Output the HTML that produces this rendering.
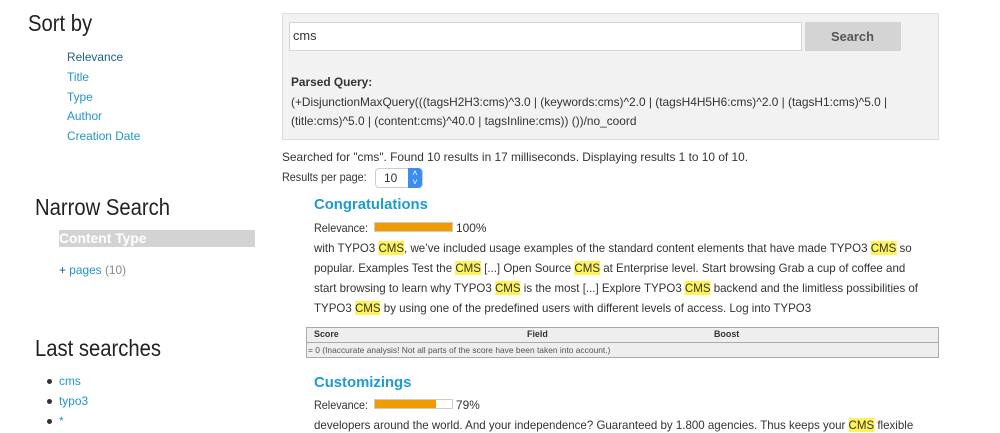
<!DOCTYPE html>
<html><head><meta charset="utf-8"><style>
body{margin:0;width:1000px;height:432px;overflow:hidden;background:#fff;font-family:"Liberation Sans",sans-serif;color:#333;position:relative}
.a{position:absolute;white-space:nowrap}
.t{position:absolute;white-space:nowrap;font-size:12px;transform:scaleX(.99);transform-origin:0 50%;line-height:16px}
.b{transform:scaleX(.96)}
.n{transform:scaleX(.9)}
.h{position:absolute;white-space:nowrap;font-size:23px;font-weight:300;color:#222;transform:scaleX(.88);transform-origin:0 50%}
.lk{color:#1f95c8}
.m{background:#fff35a}
.bar{position:absolute;height:8px;border:1px solid #ccc;background:#fff}
.bar i{display:block;height:8px;background:#f09c00}
</style></head><body>
<div class="h" style="left:28px;top:10px">Sort by</div>
<div class="t" style="left:67px;top:49px;color:#1b5f86">Relevance</div>
<div class="t lk" style="left:67px;top:69px">Title</div>
<div class="t lk" style="left:67px;top:89px">Type</div>
<div class="t lk" style="left:67px;top:108px">Author</div>
<div class="t lk" style="left:67px;top:128px">Creation Date</div>
<div class="h" style="left:35px;top:194px">Narrow Search</div>
<div class="a" style="left:59px;top:230px;width:196px;height:17px;background:#d3d3d3"></div>
<div class="t" style="left:59px;top:230px;color:#fff;font-weight:bold;font-size:14px">Content Type</div>
<div class="t" style="left:59px;top:262px"><span style="color:#1b5f86">+</span> <span class="lk">pages</span> <span style="color:#888">(10)</span></div>
<div class="h" style="left:35px;top:335px">Last searches</div>
<div class="a" style="left:47px;top:379px;width:5px;height:5px;border-radius:50%;background:#333"></div>
<div class="a" style="left:47px;top:399px;width:5px;height:5px;border-radius:50%;background:#333"></div>
<div class="a" style="left:47px;top:419px;width:5px;height:5px;border-radius:50%;background:#333"></div>
<div class="t lk" style="left:59px;top:373px">cms</div>
<div class="t lk" style="left:59px;top:393px">typo3</div>
<div class="t lk" style="left:59px;top:413px">*</div>

<div class="a" style="left:282px;top:13px;width:655px;height:125px;background:#f2f2f2;border:1px solid #ddd"></div>
<div class="a" style="left:289px;top:22px;width:511px;height:27px;background:#fff;border:1px solid #d6d6d6"></div>
<div class="t" style="left:293px;top:28px;font-size:13px">cms</div>
<div class="a" style="left:805px;top:22px;width:96px;height:29px;background:#d4d4d4"></div>
<div class="t" style="left:831px;top:29px;font-weight:bold;color:#555;font-size:13px">Search</div>
<div class="t" style="left:291px;top:74px;font-weight:bold">Parsed Query:</div>
<div class="t" style="left:291px;top:94px">(+DisjunctionMaxQuery(((tagsH2H3:cms)^3.0 | (keywords:cms)^2.0 | (tagsH4H5H6:cms)^2.0 | (tagsH1:cms)^5.0 |</div>
<div class="t" style="left:291px;top:113px">(title:cms)^5.0 | (content:cms)^40.0 | tagsInline:cms)) ())/no_coord</div>
<div class="t" style="left:282px;top:149px">Searched for "cms". Found 10 results in 17 milliseconds. Displaying results 1 to 10 of 10.</div>
<div class="t n" style="left:282px;top:169px">Results per page:</div>
<div class="a" style="left:375px;top:168px;width:46px;height:18px;border:1px solid #ccc;border-radius:4px;background:#fff"></div>
<div class="t" style="left:384px;top:170px">10</div>
<div class="a" style="left:408px;top:168px;width:14px;height:20px;border-radius:0 4px 4px 0;background:#3a8ef0;color:#fff;font-size:9px;text-align:center;line-height:9px;padding-top:1px;box-sizing:border-box">˄<br>˅</div>

<div class="t" style="left:314px;top:197px;font-weight:bold;font-size:15px;color:#1e9bd0">Congratulations</div>
<div class="t n" style="left:314px;top:220px">Relevance:</div>
<div class="bar" style="left:374px;top:222px;width:77px"><i style="width:77px"></i></div>
<div class="t" style="left:456px;top:220px">100%</div>
<div class="t b" style="left:314px;top:240px">with TYPO3 <span class="m">CMS</span>, we’ve included usage examples of the standard content elements that have made TYPO3 <span class="m">CMS</span> so</div>
<div class="t b" style="left:314px;top:260px">popular. Examples Test the <span class="m">CMS</span> [...] Open Source <span class="m">CMS</span> at Enterprise level. Start browsing Grab a cup of coffee and</div>
<div class="t b" style="left:314px;top:280px">start browsing to learn why TYPO3 <span class="m">CMS</span> is the most [...] Explore TYPO3 <span class="m">CMS</span> backend and the limitless possibilities of</div>
<div class="t b" style="left:314px;top:300px">TYPO3 <span class="m">CMS</span> by using one of the predefined users with different levels of access. Log into TYPO3</div>
<div class="a" style="left:306px;top:327px;width:631px;height:29px;border:1px solid #aaa;background:#eee"></div>
<div class="a" style="left:307px;top:342px;width:631px;height:1px;background:#aaa"></div>
<div class="t" style="left:314px;top:328px;font-size:9px;font-weight:bold;line-height:13px">Score</div>
<div class="t" style="left:527px;top:328px;font-size:9px;font-weight:bold;line-height:13px">Field</div>
<div class="t" style="left:714px;top:328px;font-size:9px;font-weight:bold;line-height:13px">Boost</div>
<div class="t" style="left:308px;top:344px;font-size:8.5px;line-height:12px;color:#555">= 0 (Inaccurate analysis! Not all parts of the score have been taken into account.)</div>

<div class="t" style="left:314px;top:375px;font-weight:bold;font-size:15px;color:#1e9bd0">Customizings</div>
<div class="t n" style="left:314px;top:397px">Relevance:</div>
<div class="bar" style="left:374px;top:399px;width:77px"><i style="width:61px"></i></div>
<div class="t" style="left:456px;top:397px">79%</div>
<div class="t b" style="left:314px;top:417px">developers around the world. And your independence? Guaranteed by 1.800 agencies. Thus keeps your <span class="m">CMS</span> flexible</div>
</body></html>
